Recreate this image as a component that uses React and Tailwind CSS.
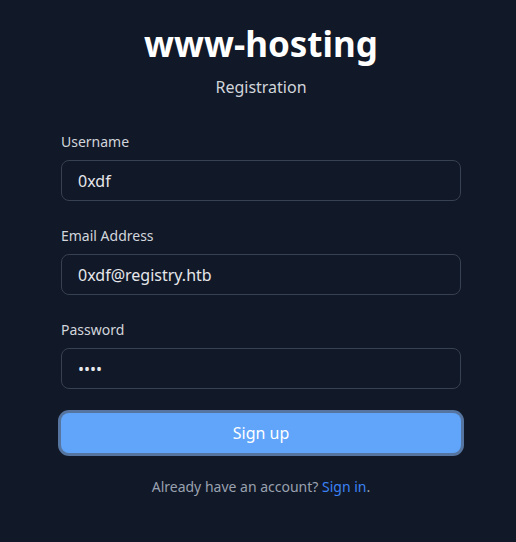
import { useState } from 'react';

const font = { fontFamily: '"Noto Sans", "Open Sans", sans-serif' };

function Field({ label, type = 'text', value, onChange }) {
  return (
    <div>
      <label className="block text-sm text-gray-300 leading-5 mb-2">{label}</label>
      <input
        type={type}
        value={value}
        onChange={e => onChange(e.target.value)}
        className="w-full h-[41px] px-4 rounded-lg border border-[#374151] bg-[#111827] text-gray-200 text-base outline-none"
      />
    </div>
  );
}

export default function App() {
  const [form, setForm] = useState({ username: '0xdf', email: '0xdf@registry.htb', password: 'pass' });

  return (
    <div className="min-h-screen bg-[#111827] flex flex-col items-center pt-[24px] pl-[6px]" style={font}>
      <h1 className="text-[35px] font-bold text-white leading-10">www-hosting</h1>
      <p className="mt-[11px] text-base text-gray-300 leading-6">Registration</p>

      <form onSubmit={e => e.preventDefault()} className="w-[400px] mt-[33px] flex flex-col gap-[25px]">
        <Field label="Username" value={form.username} onChange={v => setForm({ ...form, username: v })} />
        <Field label="Email Address" value={form.email} onChange={v => setForm({ ...form, email: v })} />
        <Field label="Password" type="password" value={form.password} onChange={v => setForm({ ...form, password: v })} />
      </form>

      <button className="w-[400px] mt-[24px] h-[40px] rounded-lg bg-[#60a5fa] text-white text-base ring-[3px] ring-[#55749f]">
        Sign up
      </button>

      <p className="mt-[24px] text-sm text-gray-400 leading-5">
        Already have an account? <a href="#" className="text-[#3b82f6]">Sign in</a>.
      </p>
    </div>
  );
}
